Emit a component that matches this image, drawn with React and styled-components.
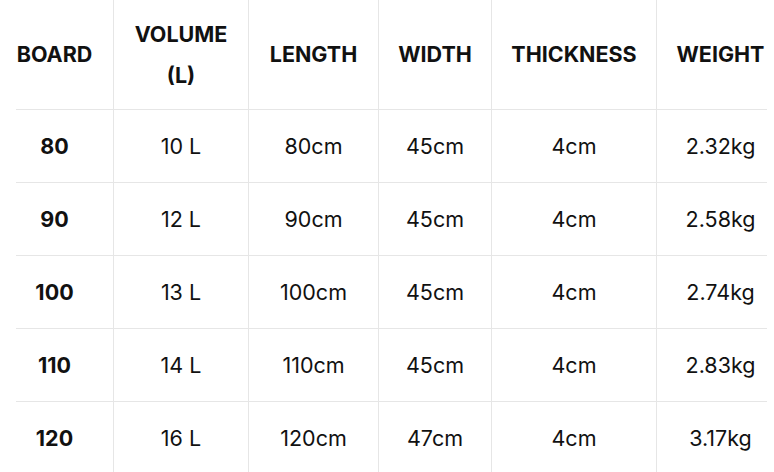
import React from "react";
import styled, { createGlobalStyle } from "styled-components";

const Global = createGlobalStyle`
  html, body { margin: 0; padding: 0; background: #fff; }
  body { font-family: Inter, "Noto Sans", sans-serif; color: #111; }
`;

const Grid = styled.div`
  display: grid;
  grid-template-columns: 97px 135px 130px 113px 165px 111px;
  grid-auto-rows: 73px;
  grid-template-rows: 110px;
  margin-left: 16px;
  width: 751px;
`;

const Cell = styled.div`
  box-sizing: border-box;
  display: flex;
  align-items: center;
  justify-content: center;
  text-align: center;
  white-space: pre;
  font-size: 21.5px;
  font-weight: ${(p) => (p.$bold ? 700 : 400)};
  line-height: 41px;
  border-left: ${(p) => (p.$first ? "none" : "1px solid #e6e6e6")};
  border-bottom: ${(p) => (p.$last ? "none" : "1px solid #e6e6e6")};
  padding-right: ${(p) => (p.$first ? "20px" : "0")};
  padding-left: ${(p) => (p.$end ? "17px" : "0")};
`;

const headers = ["BOARD", "VOLUME\n(L)", "LENGTH", "WIDTH", "THICKNESS", "WEIGHT"];
const rows = [
  ["80", "10 L", "80cm", "45cm", "4cm", "2.32kg"],
  ["90", "12 L", "90cm", "45cm", "4cm", "2.58kg"],
  ["100", "13 L", "100cm", "45cm", "4cm", "2.74kg"],
  ["110", "14 L", "110cm", "45cm", "4cm", "2.83kg"],
  ["120", "16 L", "120cm", "47cm", "4cm", "3.17kg"],
];

export default function App() {
  return (
    <>
      <Global />
      <Grid>
        {headers.map((h, i) => (
          <Cell key={h} $bold $head $first={i === 0} $end={i === 5}>
            {h}
          </Cell>
        ))}
        {rows.map((r, ri) =>
          r.map((v, i) => (
            <Cell
              key={ri + "-" + i}
              $bold={i === 0}
              $first={i === 0}
              $end={i === 5}
              $last={ri === rows.length - 1}
            >
              {v}
            </Cell>
          ))
        )}
      </Grid>
    </>
  );
}
